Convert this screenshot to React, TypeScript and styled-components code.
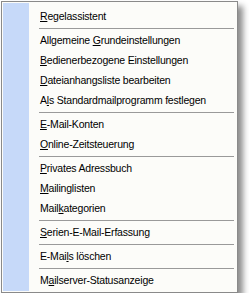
import * as React from "react";
import styled, { createGlobalStyle } from "styled-components";

const GlobalStyle = createGlobalStyle`
  body {
    margin: 0;
    background: #ffffff;
  }
`;

const Page = styled.div`
  padding: 1px 0 0 1px;
`;

const Menu = styled.div`
  width: 233px;
  border: 1px solid #8a8a8a;
  background: #fcfcf9;
  padding: 1px;
  box-shadow: 5px 5px 6px rgba(0, 0, 0, 0.45);
  font-family: "Liberation Sans", Arial, sans-serif;
  font-size: 10.5px;
  letter-spacing: -0.2px;
  color: #000;
`;

const Body = styled.div`
  display: grid;
  grid-template-columns: 26px 1fr;
  background: linear-gradient(to right, #c6d9f9 26px, transparent 26px);
  padding: 3px 0 1px;
`;

const Item = styled.div`
  grid-column: 2;
  height: 20px;
  line-height: 20px;
  padding-left: 11px;
  white-space: pre;
`;

const Separator = styled.div`
  grid-column: 2;
  height: 4px;
  display: flex;
  align-items: center;
  padding: 0 2px 0 10px;

  &::after {
    content: "";
    flex: 1;
    height: 1px;
    background: #9a9a9a;
  }
`;

type Entry = { before: string; key: string; after: string } | "sep";

const entries: Entry[] = [
  { before: "", key: "R", after: "egelassistent" },
  "sep",
  { before: "Allgemeine ", key: "G", after: "rundeinstellungen" },
  { before: "", key: "B", after: "edienerbezogene Einstellungen" },
  { before: "", key: "D", after: "ateianhangsliste bearbeiten" },
  { before: "A", key: "l", after: "s Standardmailprogramm festlegen" },
  "sep",
  { before: "", key: "E", after: "-Mail-Konten" },
  { before: "", key: "O", after: "nline-Zeitsteuerung" },
  "sep",
  { before: "", key: "P", after: "rivates Adressbuch" },
  { before: "", key: "M", after: "ailinglisten" },
  { before: "Mail", key: "k", after: "ategorien" },
  "sep",
  { before: "", key: "S", after: "erien-E-Mail-Erfassung" },
  "sep",
  { before: "E-Mai", key: "l", after: "s löschen" },
  "sep",
  { before: "M", key: "a", after: "ilserver-Statusanzeige" },
];

export default function App() {
  return (
    <Page>
      <GlobalStyle />
      <Menu>
        <Body>
          {entries.map((e, i) =>
            e === "sep" ? (
              <Separator key={i} />
            ) : (
              <Item key={i}>
                {e.before}
                <u>{e.key}</u>
                {e.after}
              </Item>
            )
          )}
        </Body>
      </Menu>
    </Page>
  );
}
